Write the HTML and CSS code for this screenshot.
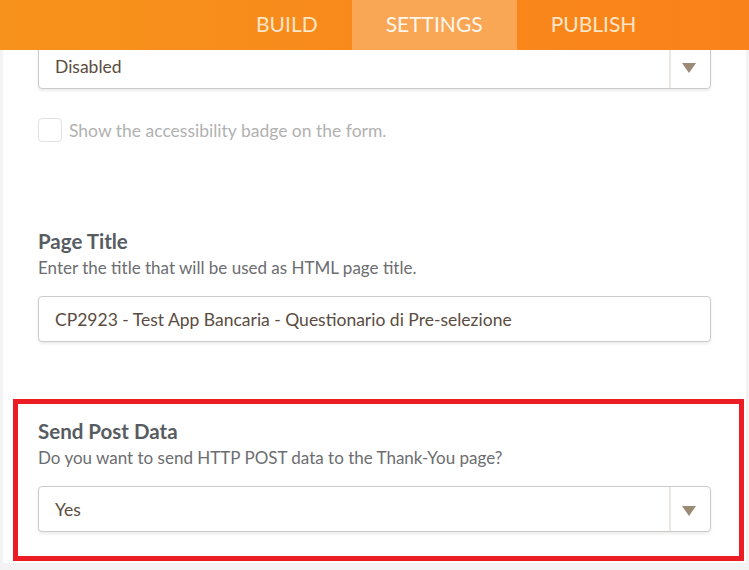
FILE: index.html
```html
<!DOCTYPE html>
<html lang="en">
<head>
  <meta charset="UTF-8">
  <meta name="viewport" content="width=device-width, initial-scale=1.0">
  <title>Form Settings</title>
  <link rel="stylesheet" href="styles.css">
</head>
<body>
  <header class="topbar">
    <nav class="tabs">
      <a class="tab" href="#">BUILD</a>
      <a class="tab active" href="#">SETTINGS</a>
      <a class="tab" href="#">PUBLISH</a>
    </nav>
  </header>

  <div class="panel">
    <div class="field first">
      <div class="select">
        <span class="select-value">Disabled</span>
        <span class="select-arrow"></span>
      </div>
      <label class="check">
        <span class="check-box"></span>
        <span class="check-text">Show the accessibility badge on the form.</span>
      </label>
    </div>

    <div class="field">
      <h3 class="field-title">Page Title</h3>
      <p class="field-desc">Enter the title that will be used as HTML page title.</p>
      <div class="input">CP2923 - Test App Bancaria - Questionario di Pre-selezione</div>
    </div>

    <div class="field highlight">
      <h3 class="field-title">Send Post Data</h3>
      <p class="field-desc">Do you want to send HTTP POST data to the Thank-You page?</p>
      <div class="select">
        <span class="select-value">Yes</span>
        <span class="select-arrow"></span>
      </div>
    </div>
  </div>
</body>
</html>
```

FILE: styles.css
```css
body {
  margin: 0;
  font-family: Lato, "Open Sans", sans-serif;
  background-color: #f3f3f3;
  color: #5c5f64;
}

.topbar {
  position: relative;
  z-index: 2;
  height: 50px;
  background: linear-gradient(90deg, #f7921c 0%, #f8881b 60%, #fa821a 100%);
}

.tabs {
  display: flex;
  height: 100%;
  padding-left: 222px;
}

.tab {
  display: flex;
  align-items: center;
  padding: 0 34px 3px;
  font-size: 21px;
  color: #fde5c8;
  text-decoration: none;
}

.tab.active {
  background-color: #f9a655;
  color: #fff6ec;
}

.panel {
  margin: 0 3px;
  background-color: white;
  min-height: 520px;
}

.field {
  padding: 0 35px;
}

.field.first {
  padding-bottom: 87px;
}

.field-title {
  margin: 0;
  font-size: 20.5px;
  font-weight: bold;
  line-height: 24px;
  color: #575c62;
}

.field-desc {
  margin: 3px 0 16px;
  font-size: 17px;
  line-height: 24px;
  color: #6c6d70;
}

.select, .input {
  display: flex;
  align-items: center;
  height: 46px;
  box-sizing: border-box;
  border: 1px solid #cdcbc8;
  border-radius: 4px;
  background-color: white;
  box-shadow: 0 2px 3px rgba(0, 0, 0, 0.08);
  font-size: 17.5px;
  color: #5a4c41;
}

.input {
  padding: 0 16px;
}

.select-value {
  flex: 1;
  padding-left: 16px;
}

.select-arrow {
  position: relative;
  width: 39px;
  height: 100%;
  border-left: 2px solid #ebe7e3;
}

.select-arrow::after {
  content: "";
  position: absolute;
  left: 11px;
  top: 19px;
  border-left: 7.5px solid transparent;
  border-right: 7.5px solid transparent;
  border-top: 10px solid #9b8b75;
}

.field.first .select {
  margin-top: -7px;
}

.check {
  display: flex;
  align-items: center;
  gap: 7px;
  margin-top: 29px;
  font-size: 17.5px;
  color: #b1b1b1;
}

.check-box {
  width: 22px;
  height: 22px;
  border: 1px solid #e2e2e2;
  border-radius: 4px;
}

.highlight {
  margin: 57px 2px 0 10px;
  padding: 15px 28px 24px 20px;
  border: 5px solid #ec1c24;
}
```
